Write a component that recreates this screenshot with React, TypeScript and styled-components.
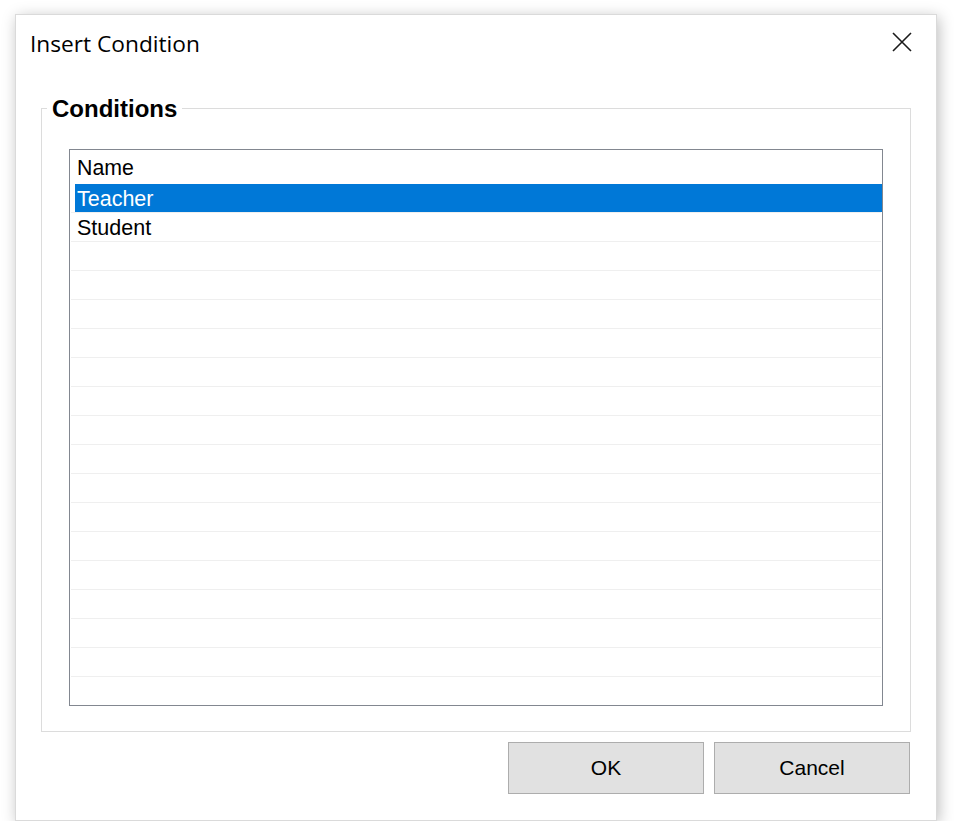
import React from "react";
import styled, { createGlobalStyle } from "styled-components";

const GlobalStyle = createGlobalStyle`
  html, body {
    margin: 0;
    padding: 0;
    background: #ffffff;
  }
  body {
    font-family: "Liberation Sans", Arial, sans-serif;
  }
`;

const Page = styled.div`
  padding: 14px 0 0 15px;
`;

const Dialog = styled.div`
  box-sizing: border-box;
  width: 922px;
  background: #ffffff;
  border: 1px solid #dadada;
  box-shadow: 2px 3px 14px rgba(0, 0, 0, 0.26);
  display: flex;
  flex-direction: column;
`;

const TitleBar = styled.div`
  height: 56px;
  display: flex;
  align-items: center;
  justify-content: space-between;
  padding: 0 14px 0 14px;
`;

const Title = styled.div`
  font-family: "Open Sans", "Noto Sans", sans-serif;
  font-size: 22.7px;
  color: #000;
`;

const CloseButton = styled.button`
  width: 40px;
  height: 40px;
  border: none;
  background: transparent;
  padding: 0;
  display: flex;
  align-items: center;
  justify-content: center;
  margin-top: -2px;
`;

const Body = styled.div`
  padding: 25px 26px 26px 25px;
  display: flex;
  flex-direction: column;
`;

const GroupBox = styled.fieldset`
  margin: 0 -1px 0 0;
  border: 1px solid #dcdcdc;
  padding: 28px 27px 25px 27px;
`;

const Legend = styled.legend`
  font-family: "Liberation Sans", Arial, sans-serif;
  font-weight: bold;
  font-size: 24px;
  line-height: 24px;
  padding: 1px 5px 0 5px;
  margin-left: -22px;
  color: #000;
`;

const ListBox = styled.div`
  height: 557px;
  box-sizing: border-box;
  border: 1px solid #828790;
  overflow: hidden;
  display: flex;
  flex-direction: column;
`;

const HeaderRow = styled.div`
  height: 34px;
  line-height: 36px;
  font-size: 21.3px;
  padding-left: 7px;
  color: #000;
`;

const Row = styled.div`
  height: 29px;
  box-sizing: border-box;
  margin: 0 1px;
  padding-left: 4px;
  border-bottom: 1px solid #efefef;
  display: flex;
`;

const Cell = styled.div<{ $selected?: boolean }>`
  flex: 1;
  height: 28px;
  line-height: 30px;
  font-size: 21.5px;
  padding-left: 2px;
  margin-right: -1px;
  overflow: hidden;
  background: ${(p) => (p.$selected ? "#0078d7" : "transparent")};
  color: ${(p) => (p.$selected ? "#ffffff" : "#000000")};
`;

const ButtonRow = styled.div`
  display: flex;
  justify-content: flex-end;
  gap: 10px;
  margin-top: 10px;
`;

const Button = styled.button`
  width: 196px;
  height: 52px;
  box-sizing: border-box;
  background: #e1e1e1;
  border: 1px solid #adadad;
  font-family: "Liberation Sans", Arial, sans-serif;
  font-size: 21px;
  color: #000;
  padding: 0;
`;

const rows = ["Teacher", "Student", ...Array(15).fill("")];

export default function App() {
  return (
    <>
      <GlobalStyle />
      <Page>
        <Dialog>
          <TitleBar>
            <Title>Insert Condition</Title>
            <CloseButton aria-label="Close">
              <svg width="20" height="20" viewBox="0 0 20 20">
                <path d="M1 1 L19 19 M19 1 L1 19" stroke="#1a1a1a" strokeWidth="1.6" fill="none" />
              </svg>
            </CloseButton>
          </TitleBar>
          <Body>
            <GroupBox>
              <Legend>Conditions</Legend>
              <ListBox>
                <HeaderRow>Name</HeaderRow>
                {rows.map((r, i) => (
                  <Row key={i}>
                    <Cell $selected={i === 0}>{r}</Cell>
                  </Row>
                ))}
              </ListBox>
            </GroupBox>
            <ButtonRow>
              <Button>OK</Button>
              <Button>Cancel</Button>
            </ButtonRow>
          </Body>
        </Dialog>
      </Page>
    </>
  );
}
